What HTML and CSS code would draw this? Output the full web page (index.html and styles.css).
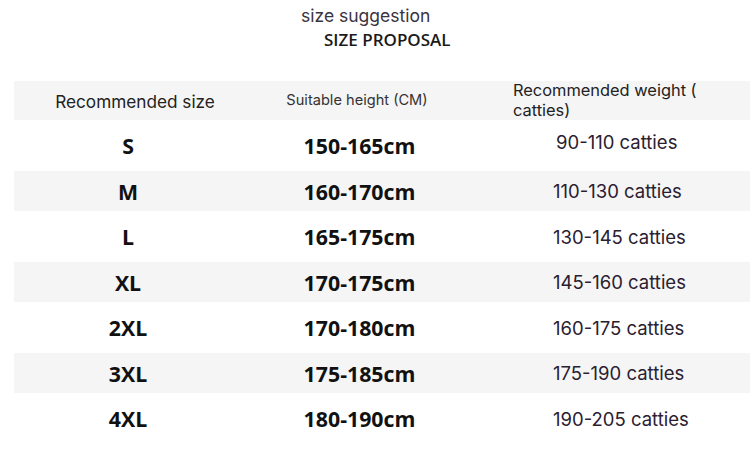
FILE: index.html
```html
<!DOCTYPE html>
<html>
<head>
<meta charset="utf-8">
<link rel="stylesheet" href="styles.css">
</head>
<body>
<div class="page">
  <div class="title">
    <div class="title-main">size suggestion</div>
    <div class="title-sub">SIZE PROPOSAL</div>
  </div>
  <div class="table">
    <div class="row head">
      <div class="c1 h1">Recommended size</div>
      <div class="c2 h2">Suitable height (CM)</div>
      <div class="c3 h3">Recommended weight (<br>catties)</div>
    </div>
    <div class="row tall">
      <div class="c1 b">S</div><div class="c2 b">150-165cm</div><div class="c3 w w-up">90-110 catties</div>
    </div>
    <div class="row band">
      <div class="c1 b">M</div><div class="c2 b">160-170cm</div><div class="c3 w">110-130 catties</div>
    </div>
    <div class="row tall">
      <div class="c1 b">L</div><div class="c2 b">165-175cm</div><div class="c3 w">130-145 catties</div>
    </div>
    <div class="row band">
      <div class="c1 b">XL</div><div class="c2 b">170-175cm</div><div class="c3 w">145-160 catties</div>
    </div>
    <div class="row tall">
      <div class="c1 b">2XL</div><div class="c2 b">170-180cm</div><div class="c3 w">160-175 catties</div>
    </div>
    <div class="row band">
      <div class="c1 b">3XL</div><div class="c2 b">175-185cm</div><div class="c3 w">175-190 catties</div>
    </div>
    <div class="row tall">
      <div class="c1 b">4XL</div><div class="c2 b">180-190cm</div><div class="c3 w">190-205 catties</div>
    </div>
  </div>
</div>
</body>
</html>
```

FILE: styles.css
```css
html, body {
  margin: 0;
  padding: 0;
  background: #ffffff;
}

.page {
  width: 753px;
  height: 459px;
  overflow: hidden;
  font-family: "Inter", "Noto Sans", sans-serif;
  color: #222;
}

.title {
  height: 81px;
  display: flex;
  flex-direction: column;
}

.title-main {
  margin-top: 5px;
  padding-left: 301px;
  font-size: 17.5px;
  line-height: 22px;
  color: #3a3340;
}

.title-sub {
  margin-top: 2px;
  padding-left: 324px;
  font-family: "Open Sans", "Noto Sans", sans-serif;
  font-weight: 600;
  font-size: 17px;
  line-height: 22px;
  color: #1a1a1a;
}

.table {
  margin-left: 14px;
  width: 736px;
  display: flex;
  flex-direction: column;
}

.row {
  display: grid;
  grid-template-columns: 228px 230px 1fr;
  align-items: center;
}

.head {
  height: 39px;
  background: #f5f5f5;
}

.tall {
  height: 51px;
}

.band {
  height: 40px;
  background: #f5f5f5;
}

.c1, .c2 {
  text-align: center;
}

.h1 {
  font-size: 17.2px;
  color: #222;
  padding-left: 14px;
  padding-top: 2px;
}

.h2 {
  font-size: 14.6px;
  color: #333;
  padding-bottom: 2px;
}

.h3 {
  font-size: 16.4px;
  line-height: 19.5px;
  color: #222;
  padding-left: 41px;
}

.b {
  font-family: "Open Sans", "Noto Sans", sans-serif;
  font-weight: 700;
  font-size: 21.3px;
  color: #111;
}

.c2.b {
  padding-left: 5px;
}

.w {
  font-size: 18.5px;
  color: #2a2030;
  padding-left: 81px;
}

.w-up {
  padding-left: 84px;
  padding-bottom: 8px;
}
```
